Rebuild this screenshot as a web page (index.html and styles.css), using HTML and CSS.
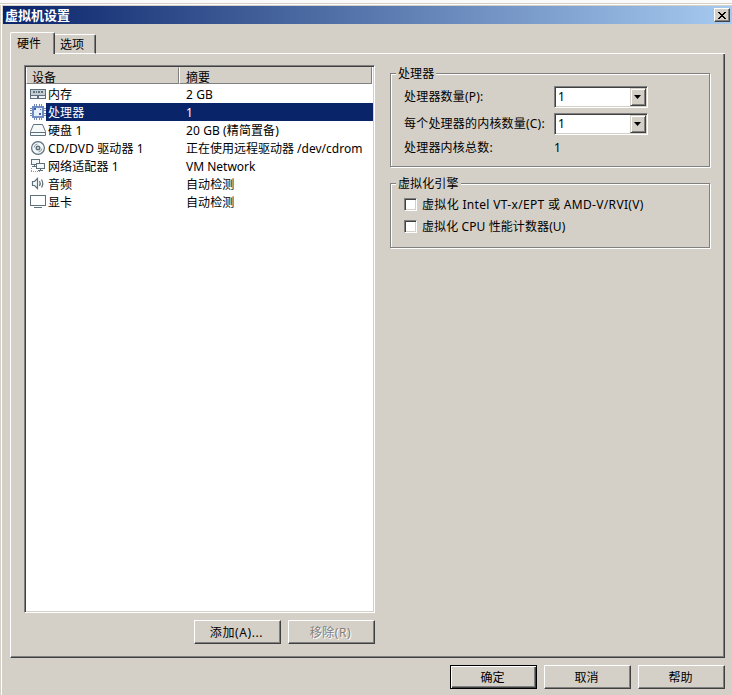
FILE: index.html
```html
<!DOCTYPE html>
<html lang="zh-CN">
<head>
<meta charset="utf-8">
<title>虚拟机设置</title>
<link rel="stylesheet" href="styles.css">
</head>
<body>
<div class="dialog">
  <header class="titlebar">
    <h1 class="title">虚拟机设置</h1>
    <button class="close" aria-label="关闭"><svg width="8" height="7" viewBox="0 0 8 7" shape-rendering="crispEdges"><path d="M0 0h2v1h1v1h2V1h1V0h2v1H7v1H6v1H5v1h1v1h1v1h1v1H6V6H5V5H3v1H2v1H0V6h1V5h1V4h1V3H2V2H1V1H0z"/></svg></button>
  </header>
  <nav class="tabs">
    <div class="tab active">硬件</div>
    <div class="tab">选项</div>
    <div class="tabline"></div>
  </nav>
  <main class="panel">
    <section class="devices">
      <div class="list">
        <div class="row head"><div class="cell">设备</div><div class="cell">摘要</div></div>
        <div class="row">
          <svg class="icon" viewBox="0 0 16 16" shape-rendering="crispEdges"><path fill="#5d707b" d="M0 3h16v10H0z"/><path fill="#c3cdd2" d="M1 4h14v5H1z"/><path fill="#eef2f4" d="M1 10h6v2H1zM9 10h6v2H9z"/><path fill="#5d707b" d="M3 5h2v2H3zM6 5h1v2H6zM8 5h2v2H8zM11 5h2v2h-2z"/></svg>
          <span class="name">内存</span><span class="sum">2 GB</span>
        </div>
        <div class="row selected">
          <svg class="icon" viewBox="0 0 16 16" shape-rendering="crispEdges"><path fill="#7187ad" d="M4 0h1v16H4zM6 0h1v16H6zM9 0h1v16H9zM11 0h1v16h-1zM0 4h16v1H0zM0 6h16v1H0zM0 9h16v1H0zM0 11h16v1H0z"/><path fill="#6f8bc4" d="M2 2h12v12H2z"/><path fill="#e6effd" d="M4 4h8v8H4z"/><path fill="#415fa0" d="M4 4h2v2H4zM10 5h1v1h-1zM9 9h2v2H9z"/></svg>
          <span class="name">处理器</span><span class="sum">1</span>
        </div>
        <div class="row">
          <svg class="icon" viewBox="0 0 16 16"><path fill="#f6f9fa" stroke="#5d707b" d="M3.500 2.500h9l3 7v4H.500v-4zM.500 10.500h15"/></svg>
          <span class="name">硬盘 1</span><span class="sum">20 GB (精简置备)</span>
        </div>
        <div class="row">
          <svg class="icon" viewBox="0 0 16 16"><circle cx="8" cy="8" r="6.400" fill="#f5f8f9" stroke="#5d707b" stroke-width="1.200"/><circle cx="8" cy="8" r="1.700" fill="none" stroke="#5d707b" stroke-width="1.600"/><path fill="none" stroke="#8c9aa3" d="M4 7.500Q4.500 4.500 7.500 4M12 8.500Q11.500 11.500 8.500 12"/></svg>
          <span class="name">CD/DVD 驱动器 1</span><span class="sum tight">正在使用远程驱动器 /dev/cdrom</span>
        </div>
        <div class="row">
          <svg class="icon" viewBox="0 0 16 16" shape-rendering="crispEdges"><path fill="#f5f8f9" stroke="#5d707b" d="M1.500 1.500h8v5h-8zM4.500 7v2M2 8.500h4"/><path fill="#f5f8f9" stroke="#5d707b" d="M6.500 5.500h8v5h-8zM10.500 11v2M8 12.500h5"/><path fill="none" stroke="#8c9aa3" stroke-dasharray="1 1" d="M1.500 10v4M1 13.500h9"/></svg>
          <span class="name">网络适配器 1</span><span class="sum tight">VM Network</span>
        </div>
        <div class="row">
          <svg class="icon" viewBox="0 0 16 16"><path fill="#f5f8f9" stroke="#5d707b" stroke-width="1.200" d="M2.500 5.500h2l3-3v10l-3-3h-2z"/><path fill="none" stroke="#5d707b" stroke-width="1.200" d="M9.500 5q1.500 2.500 0 5M11.500 3.500q2.500 4 0 8"/></svg>
          <span class="name">音频</span><span class="sum">自动检测</span>
        </div>
        <div class="row">
          <svg class="icon" viewBox="0 0 16 16" shape-rendering="crispEdges"><path fill="#5d707b" d="M0 1h16v11H0zM4 13h8v1H4z"/><path fill="#fff" d="M1 2h14v9H1z"/></svg>
          <span class="name">显卡</span><span class="sum">自动检测</span>
        </div>
      </div>
      <div class="buttons">
        <button class="btn wide">添加(A)...</button>
        <button class="btn wide" disabled>移除(R)</button>
      </div>
    </section>
    <section class="settings">
      <fieldset class="group cpu">
        <legend>处理器</legend>
        <div class="field"><span class="label">处理器数量(P):</span><div class="combo"><span>1</span><i class="drop"></i></div></div>
        <div class="field"><span class="label">每个处理器的内核数量(C):</span><div class="combo"><span>1</span><i class="drop"></i></div></div>
        <div class="field total"><span class="label">处理器内核总数:</span><span>1</span></div>
      </fieldset>
      <fieldset class="group virt">
        <legend>虚拟化引擎</legend>
        <div class="check"><i class="box"></i><span class="wide">虚拟化 Intel VT-x/EPT 或 AMD-V/RVI(V)</span></div>
        <div class="check"><i class="box"></i><span>虚拟化 CPU 性能计数器(U)</span></div>
      </fieldset>
    </section>
  </main>
  <footer class="footer">
    <button class="btn default">确定</button>
    <button class="btn">取消</button>
    <button class="btn">帮助</button>
  </footer>
</div>
</body>
</html>
```
FILE: styles.css
```css
* { box-sizing: border-box; }
body {
  margin: 0;
  background: #d4d0c8;
  color: #000;
  font: 12px/18px "Noto Sans", "Noto Sans CJK SC", sans-serif;
  letter-spacing: .1px;
  white-space: nowrap;
}
.dialog {
  width: 732px;
  height: 695px;
  overflow: hidden;
  display: flex;
  flex-direction: column;
  padding: 6px 0 0 2px;
  background:
    linear-gradient(#fafafa 3px, #d4d0c8 3px, #d4d0c8 4px, #fff 4px, #fff 5px, transparent 5px),
    linear-gradient(90deg, #d4d0c8 1px, #fff 1px, #fff 2px, #d4d0c8 2px);
}
.titlebar {
  height: 18px;
  margin-left: 1px;
  padding: 0 2px;
  display: flex;
  align-items: center;
  justify-content: space-between;
  background: linear-gradient(90deg, #0a246a, #a6caf0);
}
.title { margin: 0; font-size: 13px; line-height: 18px; letter-spacing: 0; color: #fff; font-weight: 700; }
.close {
  width: 16px;
  height: 14px;
  padding: 0 1px 0 0;
  display: flex;
  align-items: center;
  justify-content: center;
  background: #d4d0c8;
  border: 1px solid;
  border-color: #fff #404040 #404040 #fff;
  box-shadow: inset -1px -1px #808080;
}
.tabs { height: 30px; padding: 8px 0 0 8px; display: flex; align-items: flex-end; }
.tab {
  height: 20px;
  width: 41px;
  padding: 1px 0 0 5px;
  border-top: 1px solid #fff;
  border-right: 1px solid #404040;
  border-bottom: 1px solid #fff;
  border-top-right-radius: 2px;
  box-shadow: inset -1px 0 #808080;
}
.tab.active {
  height: 22px;
  width: 45px;
  padding: 2px 0 0 6px;
  border-left: 1px solid #fff;
  border-bottom: 0;
  border-top-left-radius: 2px;
}
.tabline { width: 629px; height: 1px; background: #fff; }
.panel {
  width: 715px;
  height: 604px;
  margin-left: 8px;
  padding: 11px 0 0 13px;
  display: flex;
  gap: 15px;
  border: 1px solid;
  border-color: transparent #404040 #404040 #fff;
  border-top: 0;
  box-shadow: inset -1px -1px #808080;
}
.devices { width: 351px; }
.list {
  height: 548px;
  background: #fff;
  border: 1px solid;
  border-color: #808080 #fff #fff #808080;
  box-shadow: inset 1px 1px #404040, inset -1px -1px #d4d0c8;
  padding: 1px;
}
.row { height: 18px; display: flex; padding-left: 4px; line-height: 20px; }
.icon { width: 16px; height: 16px; margin-top: 1px; flex: none; }
.name { width: 138px; height: 18px; padding-left: 2px; }
.sum { flex: 1; height: 18px; padding-left: 2px; }
.tight { letter-spacing: 0; line-height: 19px; }
.selected .name, .selected .sum { background: #0a246a; color: #fff; }
.head { height: 18px; padding: 0 1px 1px 0; line-height: 19px; }
.cell {
  width: 153px;
  padding-left: 5px;
  background: #d4d0c8;
  border: 1px solid;
  border-color: #d4d0c8 #808080 #808080 #fff;
}
.cell + .cell { flex: 1; padding-left: 6px; }
.buttons { display: flex; justify-content: flex-end; gap: 7px; margin-top: 7px; }
.btn {
  width: 87px;
  height: 24px;
  padding: 1px 2px 0 0;
  font: inherit;
  line-height: 20px;
  color: #000;
  background: #d4d0c8;
  border: 1px solid;
  border-color: #fff #404040 #404040 #fff;
  box-shadow: inset -1px -1px #808080;
}
.btn.wide { letter-spacing: .6px; }
.btn:disabled { color: #808080; text-shadow: 1px 1px #fff; }
.default {
  border-color: #000;
  box-shadow: inset 1px 1px #fff, inset -1px -1px #404040, inset -2px -2px #808080;
}
.settings { width: 321px; padding-top: 1px; }
.group {
  width: 320px;
  margin: 0 0 9px;
  padding: 0 0 0 12px;
  border: 1px solid #808080;
  box-shadow: 1px 1px #fff, inset 1px 1px #fff;
}
.group legend { height: 14px; margin-left: -7px; padding: 0 2px; background: #d4d0c8; line-height: 16px; }
.cpu { height: 101px; padding-top: 6px; }
.virt { height: 72px; padding-top: 4px; }
.field { display: flex; align-items: center; height: 22px; margin-bottom: 5px; }
.field .label { width: 151px; padding-left: 1px; letter-spacing: .2px; }
.total { margin-top: -3px; }
.combo {
  width: 94px;
  height: 22px;
  padding: 1px 1px 1px 3px;
  display: flex;
  justify-content: space-between;
  align-items: center;
  background: #fff;
  border: 1px solid;
  border-color: #808080 #fff #fff #808080;
  box-shadow: inset 1px 1px #404040, inset -1px -1px #d4d0c8;
}
.drop {
  width: 16px;
  height: 18px;
  padding: 6px 0 0 3px;
  background: #d4d0c8;
  border: 1px solid;
  border-color: #d4d0c8 #404040 #404040 #d4d0c8;
  box-shadow: inset 1px 1px #fff, inset -1px -1px #808080;
}
.drop::before {
  content: "";
  display: block;
  width: 7px;
  height: 4px;
  background: #000;
  clip-path: polygon(0 0, 100% 0, 50% 100%);
}
.check { display: flex; gap: 5px; height: 22px; padding-left: 1px; line-height: 21px; }
.check .wide { letter-spacing: .33px; }
.box {
  width: 13px;
  height: 13px;
  margin-top: 4px;
  background: #fff;
  border: 1px solid;
  border-color: #808080 #fff #fff #808080;
  box-shadow: inset 1px 1px #404040, inset -1px -1px #d4d0c8;
}
.footer { display: flex; gap: 7px; margin: 7px 7px 0 0; justify-content: flex-end; }
```
